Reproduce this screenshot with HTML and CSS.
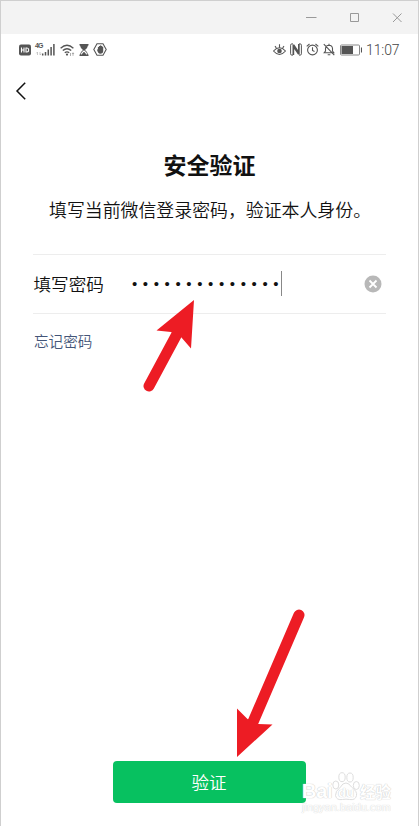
FILE: index.html
```html
<!DOCTYPE html>
<html lang="zh-CN">
<head>
    <meta charset="UTF-8">
    <meta name="viewport" content="width=device-width, initial-scale=1.0">
    <title>安全验证</title>
    <link rel="stylesheet" href="styles.css">
</head>
<body>

<div class="window">
    <!-- 窗口标题栏 -->
    <div class="titlebar">
        <svg width="12" height="12" viewBox="0 0 12 12"><path d="M1 5.5h10.5"/></svg>
        <svg width="12" height="12" viewBox="0 0 12 12"><path d="M2.5 1.5h8v8h-8z"/></svg>
        <svg width="12" height="12" viewBox="0 0 12 12"><path d="M2 1.5l8.500 8.500M10.500 1.500L2 10"/></svg>
    </div>

    <!-- 手机状态栏 -->
    <div class="status-bar">
        <div class="status-left">
            <svg width="12" height="12" viewBox="0 0 12 12">
                <rect class="fill" y="0.5" width="12" height="11" rx="2"/>
                <path class="light" d="M2.5 3.5v5M5 3.5v5M2.5 6H5M7 4v4h1q1.7 0 1.7-2T8 4z"/>
            </svg>
            <div class="network">
                <span class="network-type">4G</span>
                <svg width="21" height="14" viewBox="0 0 21 14">
                    <path class="faint" d="M2.5 9v3M1.3 10.3L2.5 9M5 9v3M6.2 10.8L5 12"/>
                    <path class="bars" d="M7.700 12.500v-2M10.500 12.500V9M13.300 12.500V6.500M16.100 12.500V4M18.900 12.500V1"/>
                </svg>
            </div>
            <svg width="15" height="12" viewBox="0 0 15 12">
                <path class="wifi" d="M.6 4.2q6.400-5.800 12.800 0M2.800 6.600q4.200-3.700 8.400 0M4.800 8.800q2.200-1.900 4.400 0"/>
                <circle class="fill" cx="7" cy="10.6" r="1.1"/>
                <path class="thin" d="M10.5 9v3M13 8.8v3M12 10l1-1.2 1 1.2"/>
            </svg>
            <svg width="10" height="12" viewBox="0 0 10 12">
                <path class="fill" d="M.5 0h9v1.6H9Q8.700 4 6 6q2.700 2 3 4.400h.5V12h-9v-1.600H1Q1.300 8 4 6 1.300 4 1 1.600H.5z"/>
                <path class="light" d="M2.300 10.300Q2.800 8.500 5 7q2.200 1.500 2.700 3.300"/>
            </svg>
            <svg width="14" height="13" viewBox="0 0 14 13">
                <path d="M4 .8h6l3.200 5.700L10 12.200H4L.8 6.500z"/>
                <path class="fill" d="M3.900 6.500h1V4h1V3h1.300v-.700h1V3h1v.700h1V8q0 2.700-3 2.700-2.200 0-3.300-4.200z"/>
            </svg>
        </div>
        <div class="status-right">
            <svg width="13" height="12" viewBox="0 0 13 12">
                <path d="M.5 7q6-6.500 12 0-6 7-12 0zM2 2.200l1.300 1.600M6.500.3v3M11 2.200L9.700 3.800"/>
                <circle class="fill" cx="6.500" cy="7" r="2.300"/>
            </svg>
            <svg width="12" height="13" viewBox="0 0 12 13">
                <path class="thin-dark" d="M3 .9H1.800Q.6.900.6 2.200v8.600q0 1.300 1.200 1.300H3M9 .9h1.200q1.200 0 1.200 1.300v8.600q0 1.300-1.200 1.300H9"/>
                <path class="fill" d="M2.500 1.500h1.800L8 7V1h1.700v10.500H8L4.200 6v6H2.500z"/>
            </svg>
            <svg width="13" height="13" viewBox="0 0 13 13">
                <circle cx="6.500" cy="7" r="4.900"/>
                <path d="M6.500 4.300v3.200l2 1M.7 3.300L3.500 1M12.300 3.300L9.500 1"/>
            </svg>
            <svg width="12" height="13" viewBox="0 0 12 13">
                <path d="M1.200 9.800h9.600L9.500 8V5.500Q9.300 2.300 6 2.200 2.700 2.400 2.500 5.500V8zM6 .8v1.400M4.700 11.700h2.600M.8 1.200l10.500 11"/>
            </svg>
            <svg class="battery-icon" width="22" height="12" viewBox="0 0 22 12">
                <rect class="battery" x=".5" y="1" width="19" height="10" rx="1"/>
                <rect class="fill" x="1.500" y="2" width="11.500" height="8"/>
                <path d="M21.500 3.500v5"/>
            </svg>
            <span class="clock">11:07</span>
        </div>
    </div>

    <div class="nav">
        <svg width="12" height="20" viewBox="0 0 12 20"><path d="M11.200 1.700L3 10l8.200 8.300"/></svg>
    </div>

    <h2>安全验证</h2>
    <p class="tip">填写当前微信登录密码，验证本人身份。</p>

    <!-- 密码输入 -->
    <div class="form-group">
        <span class="form-label">填写密码</span>
        <span class="password">••••••••••••••</span>
        <span class="caret"></span>
        <svg class="clear" width="18" height="18" viewBox="0 0 18 18">
            <circle cx="9" cy="9" r="8.500"/>
            <path d="M5.500 5.500l7 7M12.500 5.500l-7 7"/>
        </svg>
    </div>
    <a class="forgot">忘记密码</a>

    <button type="button" class="submit-btn">验证</button>

    <!-- 指示箭头 -->
    <svg class="arrows" width="419" height="826" viewBox="0 0 419 826">
        <path class="shaft" d="M149 386L178 332M299 615L253 722"/>
        <path class="head" d="M194 300L156.500 330.500 171 332 181 337 191 348.500zM237 757V708.500L247.500 719 258 724 272.500 724.500z"/>
    </svg>

    <!-- 水印 -->
    <div class="watermark">
        <div class="brand">
            <span class="brand-bai">Bai</span>
            <span class="paw">
                <svg width="28" height="29" viewBox="0 0 28 29">
                    <ellipse cx="3.800" cy="13" rx="3" ry="4"/>
                    <ellipse cx="10" cy="5.200" rx="3.200" ry="4.500"/>
                    <ellipse cx="18" cy="5.500" rx="3.200" ry="4.500"/>
                    <ellipse cx="24.300" cy="13.500" rx="3" ry="4"/>
                    <path d="M14 11q3 0 5.500 4 6 4.500 5 8.500-1 5-7 4-3.500-.7-7 0-6 1-7-4-.500-4 5-8.500 2-4 5.500-4z"/>
                </svg>
                <span class="brand-du">du</span>
            </span>
            <span class="brand-name">经验</span>
        </div>
        <div class="site">jingyan.baidu.com</div>
    </div>
</div>

</body>
</html>
```

FILE: styles.css
```css
* {
    box-sizing: border-box;
}
body {
    margin: 0;
    background-color: #fff;
    font-family: "Noto Sans CJK SC", sans-serif;
    color: #111;
}
.window {
    position: relative;
    display: flex;
    flex-direction: column;
    height: 826px;
    border: 1px solid #cfcfcf;
    border-bottom: none;
    overflow: hidden;
}
svg {
    display: block;
    flex: none;
    fill: none;
    stroke: #555;
    stroke-width: 1.1;
}
svg .fill {
    fill: #555;
    stroke: none;
}
svg .light {
    stroke: #fff;
}
.titlebar {
    display: flex;
    justify-content: flex-end;
    align-items: center;
    gap: 31px;
    height: 33px;
    padding-right: 15px;
    background-color: #f3f3f3;
}
.titlebar svg {
    stroke: #999;
    stroke-width: 1;
}
.status-bar {
    display: flex;
    justify-content: space-between;
    align-items: center;
    height: 31px;
    padding: 0 19px 0 18px;
}
.status-left,
.status-right {
    display: flex;
    align-items: center;
}
.status-left {
    gap: 4px;
}
.status-right {
    gap: 4px;
}
.network {
    position: relative;
}
.network-type {
    position: absolute;
    left: 0;
    top: -1px;
    font: bold 7px/8px "Liberation Sans", sans-serif;
    letter-spacing: -0.8px;
    color: #555;
}
.network .bars {
    stroke-width: 1.5;
}
.network .faint {
    stroke: #bbb;
    stroke-width: 0.8;
}
.wifi {
    stroke-width: 1.3;
}
.thin {
    stroke: #999;
    stroke-width: 0.8;
}
.thin-dark {
    stroke-width: 1;
}
.battery {
    stroke: #888;
    stroke-width: 1;
}
.battery-icon {
    margin-left: 1px;
}
.clock {
    font: 300 14px/16px Roboto, sans-serif;
    color: #444;
    width: 33px;
    white-space: nowrap;
    letter-spacing: -0.1px;
}
.nav {
    height: 52px;
    padding: 16px 0 0 13px;
}
.nav svg {
    stroke: #111;
    stroke-width: 1.5;
}
h2 {
    margin: 30px 0 0;
    font-size: 23px;
    line-height: 34px;
    text-align: center;
}
.tip {
    margin: 15px 0 0 48px;
    font-size: 17.9px;
    line-height: 26px;
    font-weight: 350;
    white-space: nowrap;
}
.form-group {
    display: flex;
    align-items: center;
    height: 60px;
    margin: 32px 32px 0;
    border-top: 1px solid #ededed;
    border-bottom: 1px solid #ededed;
}
.form-label {
    width: 99px;
    padding: 0 0 2px 0.5px;
    font-size: 17.6px;
    font-weight: 350;
}
.password {
    width: 149px;
    font: 15px/20px "Liberation Sans", sans-serif;
    letter-spacing: 5.62px;
    white-space: nowrap;
}
.caret {
    width: 1px;
    height: 25px;
    margin-bottom: 1px;
    background-color: #888;
}
.clear {
    margin: 0 4px 0 auto;
}
.clear circle {
    fill: #b8b8b8;
    stroke: none;
}
.clear path {
    stroke: #fff;
    stroke-width: 1.8;
}
.forgot {
    margin: 17px 0 0 33px;
    font-size: 14.6px;
    line-height: 20px;
    font-weight: 350;
    color: #435578;
}
.submit-btn {
    width: 193px;
    height: 42px;
    margin: auto 0 23.5px 112px;
    padding: 0 1px 1px 0;
    border: none;
    border-radius: 4px;
    background-color: #07c160;
    color: #fff;
    font-family: inherit;
    font-size: 17.5px;
    font-weight: 350;
}
.arrows {
    position: absolute;
    left: -1px;
    top: -1px;
}
.arrows .shaft {
    stroke: #ed1c24;
    stroke-width: 11;
    stroke-linecap: round;
}
.arrows .head {
    fill: #ed1c24;
    stroke: none;
}
.watermark {
    position: absolute;
    left: 301px;
    top: 771px;
    width: 92px;
    color: #fff;
    text-shadow: 0 0 1px #ccc, 0 0 1px #ccc;
    font-family: "Liberation Sans", sans-serif;
}
.brand {
    display: flex;
    align-items: flex-end;
    height: 29px;
}
.brand-bai {
    width: 30px;
    font-size: 20px;
    line-height: 20px;
    font-weight: bold;
    letter-spacing: -0.3px;
}
.paw {
    position: relative;
    width: 28px;
}
.paw svg {
    fill: #fff;
    stroke: #dedede;
    stroke-width: 1;
}
.brand-du {
    position: absolute;
    left: 6px;
    top: 13px;
    font-size: 13px;
    line-height: 15px;
    font-weight: bold;
}
.brand-name {
    font: bold 15.5px/20px "Noto Sans CJK SC", sans-serif;
    white-space: nowrap;
}
.site {
    font-size: 11px;
    line-height: 13px;
    white-space: nowrap;
    text-shadow: 0 0 1px #d4d4d4, 0 0 1px #ddd;
}
```
